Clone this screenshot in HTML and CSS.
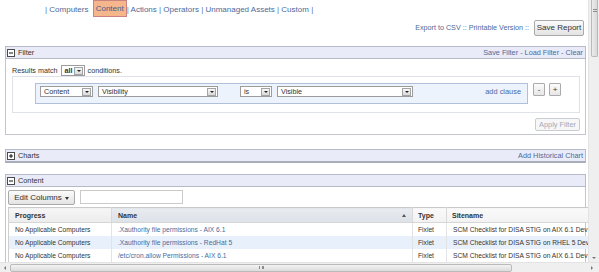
FILE: index.html
```html
<!DOCTYPE html>
<html>
<head>
<meta charset="utf-8">
<title>Report</title>
<link rel="stylesheet" href="styles.css">
</head>
<body>
<div class="screen">
  <main class="page">
    <nav class="tabs">| <a>Computers</a> <a class="active">Content</a>| <a>Actions</a> | <a>Operators</a> | <a>Unmanaged Assets</a> | <a>Custom</a> |</nav>

    <div class="toolbar">
      <span class="links">Export to CSV :: Printable Version ::</span>
      <button class="btn save">Save Report</button>
    </div>

    <section class="panel filter">
      <header class="phead">
        <svg class="tog" width="8" height="8" viewBox="0 0 8 8"><rect x="0.5" y="0.5" width="7" height="7" fill="#fff" stroke="#4a4a4a"/><path d="M2 4h4" stroke="#111"/></svg>
        <span class="ptitle">Filter</span>
        <span class="pactions">Save Filter - Load Filter - Clear</span>
      </header>
      <div class="pbody filter-body">
        <div class="match">
          <span>Results match</span>
          <span class="sel w-all"><span class="val bold">all</span><span class="arr"></span></span>
          <span>conditions.</span>
        </div>
        <div class="clauses">
          <div class="clause">
            <span class="sel w-content"><span class="val">Content</span><span class="arr"></span></span>
            <span class="sel w-prop"><span class="val">Visibility</span><span class="arr"></span></span>
            <span class="sel w-op"><span class="val">is</span><span class="arr"></span></span>
            <span class="sel w-value"><span class="val">Visible</span><span class="arr"></span></span>
            <span class="addclause">add clause</span>
          </div>
          <button class="mini">-</button>
          <button class="mini">+</button>
        </div>
        <div class="apply-row"><button class="btn apply">Apply Filter</button></div>
      </div>
    </section>

    <section class="panel charts">
      <header class="phead collapsed">
        <svg class="tog" width="8" height="8" viewBox="0 0 8 8"><rect x="0.5" y="0.5" width="7" height="7" fill="#fff" stroke="#4a4a4a"/><path d="M2 4h4M4 2v4" stroke="#111"/></svg>
        <span class="ptitle">Charts</span>
        <span class="pactions">Add Historical Chart</span>
      </header>
    </section>

    <section class="panel content">
      <header class="phead">
        <svg class="tog" width="8" height="8" viewBox="0 0 8 8"><rect x="0.5" y="0.5" width="7" height="7" fill="#fff" stroke="#4a4a4a"/><path d="M2 4h4" stroke="#111"/></svg>
        <span class="ptitle">Content</span>
      </header>
      <div class="pbody content-body">
        <div class="editrow">
          <button class="btn editcols">Edit Columns <span class="caret"></span></button>
          <span class="search"></span>
        </div>
        <table class="grid">
          <colgroup><col class="c1"><col class="c2"><col class="c3"><col class="c4"></colgroup>
          <thead>
            <tr>
              <th>Progress</th>
              <th class="sorted"><span class="thin">Name<span class="sortarrow"></span></span></th>
              <th class="plain">Type</th>
              <th class="plain">Sitename</th>
            </tr>
          </thead>
          <tbody>
            <tr><td>No Applicable Computers</td><td class="link">.Xauthority file permissions - AIX 6.1</td><td>Fixlet</td><td>SCM Checklist for DISA STIG on AIX 6.1 Dev</td></tr>
            <tr class="alt"><td>No Applicable Computers</td><td class="link">.Xauthority file permissions - RedHat 5</td><td>Fixlet</td><td>SCM Checklist for DISA STIG on RHEL 5 Dev</td></tr>
            <tr><td>No Applicable Computers</td><td class="link">/etc/cron.allow Permissions - AIX 6.1</td><td>Fixlet</td><td>SCM Checklist for DISA STIG on AIX 6.1 Dev</td></tr>
          </tbody>
        </table>
      </div>
    </section>
  </main>

  <div class="vscroll">
    <div class="vthumb"><span class="vgrip"></span></div>
    <div class="vspace"></div>
    <div class="sarrow down"></div>
  </div>

  <div class="hscroll">
    <div class="sarrow left"></div>
    <div class="hthumb"><span class="hgrip"></span></div>
    <div class="hspace"></div>
    <div class="sarrow right"></div>
  </div>
</div>
</body>
</html>
```

FILE: styles.css
```css
* { box-sizing: border-box; }
html, body { margin: 0; padding: 0; background: #fff; }
body {
  font-family: "Liberation Sans", Arial, sans-serif;
  color: #333;
  overflow: hidden;
}

.screen {
  display: grid;
  grid-template-columns: 588px 11px;
  grid-template-rows: 262px 10px;
  width: 599px;
  height: 272px;
  overflow: hidden;
}

.page {
  overflow: hidden;
  min-width: 0;
  padding: 0 2px 0 5px;
}

/* top navigation */
.tabs {
  height: 19px;
  line-height: 19px;
  padding-left: 40px;
  font-size: 8px;
  color: #5a76a3;
  white-space: nowrap;
}
.tabs a { color: #4d6a9a; }
.tabs .active {
  display: inline-block;
  vertical-align: middle;
  line-height: 9px;
  padding: 3px 2px;
  margin: 0 0 2px 2px;
  background: #f5b68c;
  border: 1px solid #c98383;
  color: #3f5c8c;
}

.toolbar {
  height: 17px;
  display: flex;
  justify-content: flex-end;
  align-items: center;
  gap: 5px;
  padding-right: 2px;
  font-size: 7.2px;
  color: #4d6a9a;
}

.btn {
  font-family: "Liberation Sans", Arial, sans-serif;
  border: 1px solid #a9a9a9;
  border-radius: 2px;
  background: linear-gradient(#fbfbfb, #e3e3e3);
  color: #333;
  padding: 0;
  margin: 0;
}
.btn.save {
  width: 50px;
  height: 16px;
  font-size: 8px;
}

/* panels */
.panel.filter { margin-top: 10px; }
.panel.charts { margin-top: 14px; }
.panel.content { margin-top: 11px; }

.phead {
  height: 13px;
  display: flex;
  align-items: center;
  padding: 0 2px 0 1px;
  background: #e9ecf8;
  border: 1px solid #b7bbc7;
  font-size: 7.3px;
  color: #333;
}
.phead.collapsed {
  height: 14px;
  border-bottom: 2px solid #a9aebb;
}
.tog { flex: none; display: block; }
.ptitle { margin-left: 3px; }
.pactions { margin-left: auto; color: #4d6a9a; }

.pbody {
  border: 1px solid #c3c6cf;
  border-top: none;
}

.filter-body { padding: 6px 5px 3px 6px; }

.match {
  height: 11px;
  display: flex;
  align-items: center;
  gap: 3px;
  font-size: 7.2px;
  color: #333;
}

/* select boxes */
.sel {
  display: flex;
  align-items: center;
  height: 11px;
  background: #fff;
  border: 1px solid #9c9c9c;
  font-size: 7.2px;
  color: #333;
  flex: none;
}
.sel .val { flex: 1; padding-left: 3px; line-height: 9px; }
.sel .bold { font-weight: bold; }
.sel .arr {
  position: relative;
  width: 9px;
  height: 8px;
  margin-right: 1px;
  border: 1px solid #a4a4a4;
  background: linear-gradient(#f7f7f7, #dadada);
}
.sel .arr::after {
  content: "";
  position: absolute;
  left: 2px;
  top: 2px;
  border-left: 2px solid transparent;
  border-right: 2px solid transparent;
  border-top: 2px solid #222;
}
.w-all { width: 24px; }
.w-content { width: 53px; }
.w-prop { width: 120px; margin-left: 5px; }
.w-op { width: 32px; margin-left: 22px; }
.w-value { width: 136px; margin-left: 5px; }

.clauses {
  height: 37px;
  display: flex;
  align-items: flex-start;
  padding: 6px 0 0 22px;
  border: 1px solid #dfe2e8;
}
.clause {
  width: 493px;
  height: 21px;
  display: flex;
  align-items: flex-start;
  padding: 2px 6px 0 4px;
  background: #edf3fc;
  border: 1px solid #afc0d8;
}
.addclause {
  margin-left: auto;
  line-height: 11px;
  font-size: 7.4px;
  color: #4d6a9a;
}
.mini {
  width: 12px;
  height: 13px;
  margin-left: 4px;
  padding: 0;
  border: 1px solid #ababab;
  border-radius: 1px;
  background: linear-gradient(#fbfbfb, #e6e6e6);
  font-family: "Liberation Sans", Arial, sans-serif;
  font-size: 8px;
  line-height: 10px;
  color: #333;
}
.mini:first-of-type { margin-left: 5px; }

.apply-row {
  display: flex;
  justify-content: flex-end;
  margin-top: 5px;
}
.btn.apply {
  width: 45px;
  height: 13px;
  font-size: 7.4px;
  color: #a2aaba;
  border-color: #c9ccd3;
  background: #f7f7f7;
}

/* content panel */
.content-body {
  padding: 3px 0 0 2px;
  border-bottom: none;
}
.editrow {
  display: flex;
  gap: 5px;
  height: 15px;
}
.btn.editcols {
  width: 67px;
  height: 15px;
  font-size: 8px;
  display: flex;
  align-items: center;
  justify-content: center;
  gap: 3px;
}
.caret {
  border-left: 2.5px solid transparent;
  border-right: 2.5px solid transparent;
  border-top: 3px solid #333;
  margin-top: 1px;
}
.search {
  width: 103px;
  height: 14px;
  border: 1px solid #cacaca;
  background: #fff;
}

.grid {
  margin-top: 2px;
  border-collapse: collapse;
  table-layout: fixed;
  width: 638px;
  font-size: 6.7px;
  border-left: 1px solid #cfcfcf;
}
.grid col.c1 { width: 103px; }
.grid col.c2 { width: 301px; }
.grid col.c3 { width: 34px; }
.grid col.c4 { width: 200px; }
.grid th {
  height: 15px;
  padding: 0 6px;
  text-align: left;
  font-weight: bold;
  font-size: 7px;
  color: #333;
  background: linear-gradient(#f6f6f6, #ececec);
  border-top: 1px solid #c9c9c9;
  border-bottom: 1px solid #d6d6d6;
  border-right: 1px solid #d9d9d9;
  white-space: nowrap;
}
.grid th.sorted {
  background: linear-gradient(#e8ebf0, #dde2e9);
}
.grid th.plain {
  background: linear-gradient(#fafafa, #f2f2f2);
  padding-left: 5px;
}
.grid th .thin {
  display: flex;
  align-items: center;
}
.sortarrow {
  margin-left: auto;
  border-left: 2px solid transparent;
  border-right: 2px solid transparent;
  border-bottom: 3px solid #555;
}
.grid td {
  height: 13px;
  padding: 0 6px;
  white-space: nowrap;
  border-right: 1px solid #e3e3e3;
  color: #333;
}
.grid td:nth-child(3) { padding-left: 5px; }
.grid td.link { color: #4a6a9d; }
.grid tr.alt td { background: #e8f1fb; }

/* scrollbars */
.vscroll {
  display: flex;
  flex-direction: column;
  background: #efefef;
  border-left: 1px solid #e3e3e3;
}
.vthumb {
  height: 57px;
  margin: 0 1px 0 2px;
  border: 1px solid #b9b9b9;
  border-top: none;
  border-radius: 0 0 2px 2px;
  background: linear-gradient(90deg, #ececec, #d9d9d9);
  display: flex;
  justify-content: center;
  padding-top: 9px;
}
.vgrip {
  width: 4px;
  height: 3px;
  border-top: 1px solid #8c8c8c;
  border-bottom: 1px solid #8c8c8c;
}
.vspace { flex: 1; }
.sarrow {
  flex: none;
  display: flex;
  align-items: center;
  justify-content: center;
  width: 10px;
  height: 9px;
}
.sarrow::after { content: ""; }
.sarrow.down::after {
  border-left: 2px solid transparent;
  border-right: 2px solid transparent;
  border-top: 2px solid #777;
}
.sarrow.left::after {
  border-top: 2px solid transparent;
  border-bottom: 2px solid transparent;
  border-right: 2px solid #777;
}
.sarrow.right::after {
  border-top: 2px solid transparent;
  border-bottom: 2px solid transparent;
  border-left: 2px solid #777;
}

.hscroll {
  grid-column: 1 / 3;
  display: flex;
  align-items: center;
  background: #efefef;
  border-top: 1px solid #e3e3e3;
}
.hthumb {
  width: 502px;
  height: 8px;
  border: 1px solid #bababa;
  border-radius: 2px;
  background: linear-gradient(#f3f3f3, #dcdcdc);
  display: flex;
  align-items: center;
  justify-content: center;
}
.hgrip {
  width: 5px;
  height: 3px;
  border-left: 1px solid #8c8c8c;
  border-right: 1px solid #8c8c8c;
  background: linear-gradient(90deg, transparent 2px, #8c8c8c 2px, #8c8c8c 3px, transparent 3px);
}
.hspace { flex: 1; }
.hscroll .sarrow.right { margin-right: 2px; }
```
